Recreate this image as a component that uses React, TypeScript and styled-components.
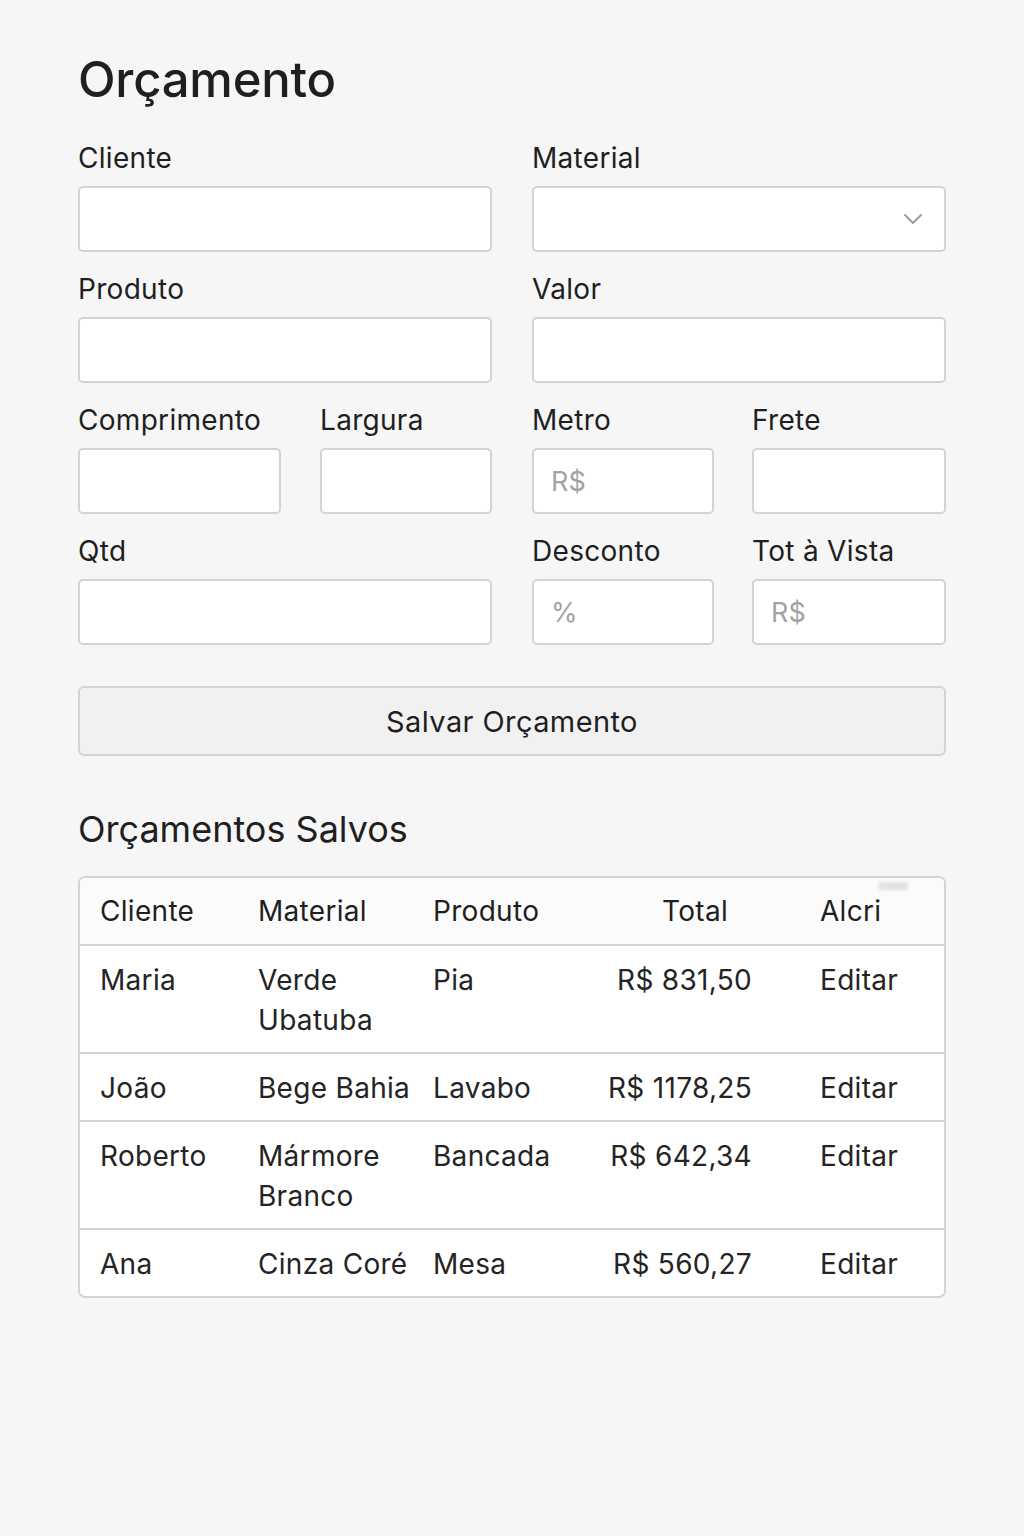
import React from 'react'
import styled, {createGlobalStyle} from 'styled-components'

const GlobalStyle = createGlobalStyle`
  body {
    margin: 0;
    background: #f6f6f6;
    font-family: Inter, "Liberation Sans", sans-serif;
    color: #1f1f1f;
  }
`;

const Page = styled.div`
  width: 868px;
  margin: 0 auto;
  padding: 51px 0 120px;
`;

const Title = styled.h1`
  margin: 0 0 33px;
  font-size: 49px;
  line-height: 58px;
  font-weight: 500;
  letter-spacing: -0.2px;
`;

const FormGrid = styled.div`
  display: grid;
  grid-template-columns: 1fr 1fr;
  column-gap: 40px;
  row-gap: 21px;
`;

const Half = styled.div<{$cols: string; $gap: number}>`
  display: grid;
  grid-template-columns: ${p => p.$cols};
  column-gap: ${p => p.$gap}px;
`;

const Field = styled.label`
  display: flex;
  flex-direction: column;
  min-width: 0;
`;

const Label = styled.span`
  font-size: 28px;
  line-height: 32px;
  letter-spacing: 0.3px;
  margin-bottom: 12px;
  color: #1f1f1f;
`;

const InputBox = styled.div`
  height: 66px;
  box-sizing: border-box;
  background: #fff;
  border: 2px solid #d3d3d3;
  border-radius: 5px;
  display: flex;
  align-items: center;
  padding: 0 17px;
`;

const Input = styled.input`
  border: none;
  outline: none;
  background: transparent;
  width: 100%;
  font: inherit;
  font-size: 27px;
  color: #222;
  padding: 0;
  &::placeholder {
    color: #a3a3a3;
  }
`;

const Chevron = styled.svg`
  flex: none;
  margin-right: 4px;
`;

const SaveButton = styled.button`
  display: block;
  width: 100%;
  height: 70px;
  margin-top: 41px;
  background: #f1f1f1;
  border: 2px solid #d3d3d3;
  border-radius: 6px;
  font-family: inherit;
  font-size: 29px;
  letter-spacing: 0.4px;
  color: #1f1f1f;
  cursor: pointer;
`;

const SubTitle = styled.h2`
  margin: 51px 0 25px;
  font-size: 36px;
  line-height: 44px;
  font-weight: 400;
`;

const TableWrap = styled.div`
  position: relative;
  background: #fff;
  border: 2px solid #d3d3d3;
  border-radius: 7px;
  overflow: hidden;
`;

// faint grey blot in the header's top-right corner of the original
const Smudge = styled.div`
  position: absolute;
  top: 4px;
  right: 36px;
  width: 30px;
  height: 8px;
  border-radius: 4px;
  background: #e2e2e2;
  filter: blur(1.5px);
`;

const Table = styled.table`
  width: 100%;
  border-collapse: collapse;
  table-layout: fixed;
  font-size: 28px;
  letter-spacing: 0.3px;
`;

const Th = styled.th<{$align?: string; $pr?: number}>`
  font-weight: 400;
  text-align: ${p => p.$align || 'left'};
  padding: 13px ${p => p.$pr || 0}px 13px 20px;
  line-height: 40px;
  border-bottom: 2px solid #d3d3d3;
  background: #fbfbfb;
`;

const Row = styled.tr`
  & + & td {
    border-top: 2px solid #d3d3d3;
  }
`;

const Td = styled.td<{$align?: string; $pr?: number}>`
  text-align: ${p => p.$align || 'left'};
  vertical-align: top;
  padding: 14px ${p => p.$pr || 0}px 12px 20px;
  line-height: 40px;
  color: #242424;
  white-space: nowrap;
`;

type Budget = {cliente: string; material: React.ReactNode; produto: string; total: string}

const budgets: Budget[] = [
  {cliente: 'Maria', material: <>Verde<br/>Ubatuba</>, produto: 'Pia', total: 'R$ 831,50'},
  {cliente: 'João', material: 'Bege Bahia', produto: 'Lavabo', total: 'R$ 1178,25'},
  {cliente: 'Roberto', material: <>Mármore<br/>Branco</>, produto: 'Bancada', total: 'R$ 642,34'},
  {cliente: 'Ana', material: 'Cinza Coré', produto: 'Mesa', total: 'R$ 560,27'},
];

function TextField({label, placeholder, select}: {label: string; placeholder?: string; select?: boolean}) {
  return (
    <Field>
      <Label>{label}</Label>
      <InputBox>
        <Input placeholder={placeholder} readOnly={select}/>
        {select && (
          <Chevron width="20" height="12" viewBox="0 0 20 12" fill="none">
            <path d="M2 2l8 8 8-8" stroke="#9a9a9a" strokeWidth="1.8" strokeLinecap="round" strokeLinejoin="round"/>
          </Chevron>
        )}
      </InputBox>
    </Field>
  )
}

export default function App() {
  return (
    <>
      <GlobalStyle/>
      <Page>
        <Title>Orçamento</Title>
        <FormGrid>
          <TextField label="Cliente"/>
          <TextField label="Material" select/>
          <TextField label="Produto"/>
          <TextField label="Valor"/>
          <Half $cols="203fr 172fr" $gap={39}>
            <TextField label="Comprimento"/>
            <TextField label="Largura"/>
          </Half>
          <Half $cols="182fr 194fr" $gap={38}>
            <TextField label="Metro" placeholder="R$"/>
            <TextField label="Frete"/>
          </Half>
          <TextField label="Qtd"/>
          <Half $cols="182fr 194fr" $gap={38}>
            <TextField label="Desconto" placeholder="%"/>
            <TextField label="Tot à Vista" placeholder="R$"/>
          </Half>
        </FormGrid>
        <SaveButton>Salvar Orçamento</SaveButton>

        <SubTitle>Orçamentos Salvos</SubTitle>
        <TableWrap>
          <Smudge/>
          <Table>
            <colgroup>
              <col style={{width: 158}}/>
              <col style={{width: 175}}/>
              <col style={{width: 150}}/>
              <col style={{width: 237}}/>
              <col/>
            </colgroup>
            <thead>
              <tr>
                <Th>Cliente</Th>
                <Th>Material</Th>
                <Th>Produto</Th>
                <Th $align="right" $pr={72}>Total</Th>
                <Th>Alcri</Th>
              </tr>
            </thead>
            <tbody>
              {budgets.map(b => (
                <Row key={b.cliente}>
                  <Td>{b.cliente}</Td>
                  <Td>{b.material}</Td>
                  <Td>{b.produto}</Td>
                  <Td $align="right" $pr={48}>{b.total}</Td>
                  <Td>Editar</Td>
                </Row>
              ))}
            </tbody>
          </Table>
        </TableWrap>
      </Page>
    </>
  )
}
